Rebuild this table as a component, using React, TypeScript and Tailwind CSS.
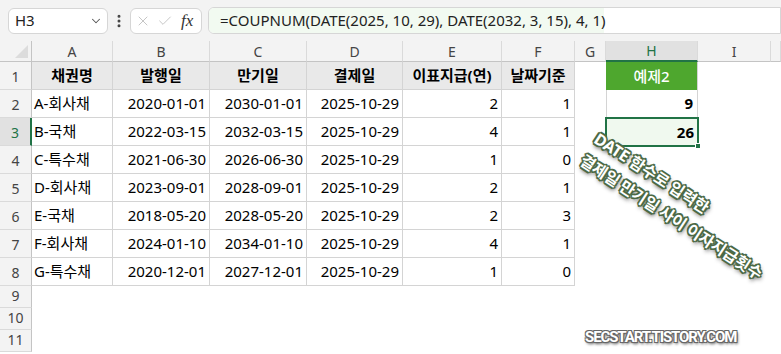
import { ChevronDown, EllipsisVertical, X, Check } from 'lucide-react';

const cols = ['A', 'B', 'C', 'D', 'E', 'F', 'G', 'H', 'I', ''];

const heads = ['채권명', '발행일', '만기일', '결제일', '이표지급(연)', '날짜기준'];

const bonds: [string, string, string, string, number, number][] = [
  ['A-회사채', '2020-01-01', '2030-01-01', '2025-10-29', 2, 1],
  ['B-국채', '2022-03-15', '2032-03-15', '2025-10-29', 4, 1],
  ['C-특수채', '2021-06-30', '2026-06-30', '2025-10-29', 1, 0],
  ['D-회사채', '2023-09-01', '2028-09-01', '2025-10-29', 2, 1],
  ['E-국채', '2018-05-20', '2028-05-20', '2025-10-29', 2, 3],
  ['F-회사채', '2024-01-10', '2034-01-10', '2025-10-29', 4, 1],
  ['G-특수채', '2020-12-01', '2027-12-01', '2025-10-29', 1, 0],
];

const grid = 'border-r border-b border-[#d4d4d4]';

const RowHead = ({ n }: { n: number }) => {
  const active = n === 3;
  return (
    <div
      className={
        'flex items-end justify-center pb-[2px] text-[14px] border-b border-[#dadada] ' +
        (active
          ? 'bg-[#e1e1e1] text-[#217346] border-r-2 border-r-[#217346]'
          : 'bg-[#f3f3f3] text-[#444] border-r border-r-[#c4c4c4]')
      }
    >
      {n}
    </div>
  );
};

export default function App() {
  return (
    <div className="relative w-[781px] h-[354px] overflow-hidden bg-white font-['Noto_Sans','Noto_Sans_CJK_KR',sans-serif] text-black">
      {/* formula bar */}
      <div className="h-[41px] bg-[#f3f3f3] flex items-center pl-2">
        <div className="w-[100px] h-[26px] bg-white border border-[#d6d6d6] rounded-md flex items-center justify-between pl-[6px] pr-[4px]">
          <span className="text-[15px] text-[#222]">H3</span>
          <ChevronDown size={14} strokeWidth={1.8} className="text-[#555]" />
        </div>
        <div className="w-[22px] flex justify-center">
          <EllipsisVertical size={16} strokeWidth={2.5} className="text-[#444]" />
        </div>
        <div className="w-[72px] h-[26px] bg-white border border-[#d6d6d6] rounded-md flex items-center pl-[4px] gap-[6px]">
          <X size={16} strokeWidth={1.3} className="text-[#bdbdbd]" />
          <Check size={16} strokeWidth={1.3} className="text-[#bdbdbd]" />
          <span className="font-['Liberation_Serif',serif] italic text-[17px] text-[#333] ml-[2px]">fx</span>
        </div>
        <div className="ml-[6px] flex-1 h-[27px] bg-white border border-[#d6d6d6] rounded-l-md flex overflow-hidden">
          <div className="w-[395px] bg-[#f2faf1] flex items-center pl-[11px] text-[15px] text-[#222] whitespace-nowrap">
            =COUPNUM(DATE(2025, 10, 29), DATE(2032, 3, 15), 4, 1)
          </div>
        </div>
      </div>

      {/* sheet */}
      <div className="grid grid-cols-[32px_81px_97px_97px_96px_99px_73px_31px_92px_73px_1fr] grid-rows-[21px_repeat(8,28px)_repeat(3,22px)]">
        <div className="relative bg-[#f3f3f3] border-r border-b border-[#c4c4c4]">
          <div className="absolute right-[3px] bottom-[3px] w-0 h-0 border-l-[13px] border-l-transparent border-b-[13px] border-b-[#dcdcdc]" />
        </div>
        {cols.map((c, i) =>
          c === 'H' ? (
            <div key={i} className="flex items-center justify-center text-[14px] bg-[#e1e1e1] text-[#217346] border-r border-[#dadada] border-b-2 border-b-[#217346]">
              {c}
            </div>
          ) : (
            <div key={i} className="flex items-center justify-center text-[14px] bg-[#f3f3f3] text-[#444] border-r border-[#dadada] border-b border-b-[#c4c4c4]">
              {c}
            </div>
          )
        )}

        {/* row 1 */}
        <RowHead n={1} />
        {heads.map((h) => (
          <div key={h} className={'flex items-end justify-center pb-[3px] text-[15px] font-bold bg-[#e9e9e9] ' + grid}>
            {h}
          </div>
        ))}
        <div />
        <div className="flex items-end justify-center pb-[3px] text-[15px] font-medium text-white bg-[#4ea72e] border-r border-[#d4d4d4]">
          예제2
        </div>
        <div />
        <div />

        {bonds.map((b, r) => (
          <div key={r} className="contents">
            <RowHead n={r + 2} />
            <div className={'flex items-end pl-[2px] pb-[3px] text-[15px] ' + grid}>{b[0]}</div>
            <div className={'flex items-end justify-end pr-[3px] pb-[3px] text-[15px] ' + grid}>{b[1]}</div>
            <div className={'flex items-end justify-end pr-[3px] pb-[3px] text-[15px] ' + grid}>{b[2]}</div>
            <div className={'flex items-end justify-end pr-[3px] pb-[3px] text-[15px] ' + grid}>{b[3]}</div>
            <div className={'flex items-end justify-end pr-[3px] pb-[3px] text-[15px] ' + grid}>{b[4]}</div>
            <div className={'flex items-end justify-end pr-[3px] pb-[3px] text-[15px] ' + grid}>{b[5]}</div>
            <div />
            {r === 0 && (
              <div className={'flex items-end justify-end pr-[4px] pb-[3px] text-[15px] font-bold border-l border-[#d4d4d4] ' + grid}>9</div>
            )}
            {r === 1 && (
              <div className="relative flex items-end justify-end pr-[4px] pb-[3px] text-[15px] font-bold bg-[#f0f9ef]">
                <div className="absolute -inset-[1px] border-2 border-[#217346]" />
                <div className="absolute -right-[3px] -bottom-[3px] w-[6px] h-[6px] bg-[#217346] border border-white" />
                <span className="relative">26</span>
              </div>
            )}
            {r > 1 && <div />}
            <div />
            <div />
          </div>
        ))}

        {[9, 10, 11].map((n) => (
          <div key={n} className="contents">
            <div className="flex items-end justify-center pb-[1px] text-[14px] text-[#444] bg-[#f3f3f3] border-r border-[#c4c4c4] border-b border-b-[#dadada]">
              {n}
            </div>
            {cols.map((_, i) => (
              <div key={i} />
            ))}
          </div>
        ))}
      </div>

      {/* callout text */}
      <div className="absolute left-[603px] top-[126px] origin-top-left rotate-[33deg] whitespace-nowrap text-left text-[16px] leading-[26px] font-bold tracking-[-0.3px] text-white [text-shadow:-1px_-1px_0_#4b6945,1px_-1px_0_#4b6945,-1px_1px_0_#4b6945,1px_1px_0_#4b6945,0_2px_0_#4b6945,2px_0_0_#4b6945,-2px_0_0_#4b6945,0_-2px_0_#4b6945,2px_2px_4px_#2a2a2a]">
        <div>DATE 함수로 입력한</div>
        <div>결제일 만기일 사이 이자지급횟수</div>
      </div>

      {/* watermark */}
      <div className="absolute left-[585px] top-[326px] font-['Roboto',sans-serif] text-[15px] font-bold tracking-[-1.1px] text-white [text-shadow:-1px_-1px_0_#666,1px_-1px_0_#666,-1px_1px_0_#666,1px_1px_0_#666,1px_2px_3px_#444]">
        SECSTART.TISTORY.COM
      </div>
    </div>
  );
}
